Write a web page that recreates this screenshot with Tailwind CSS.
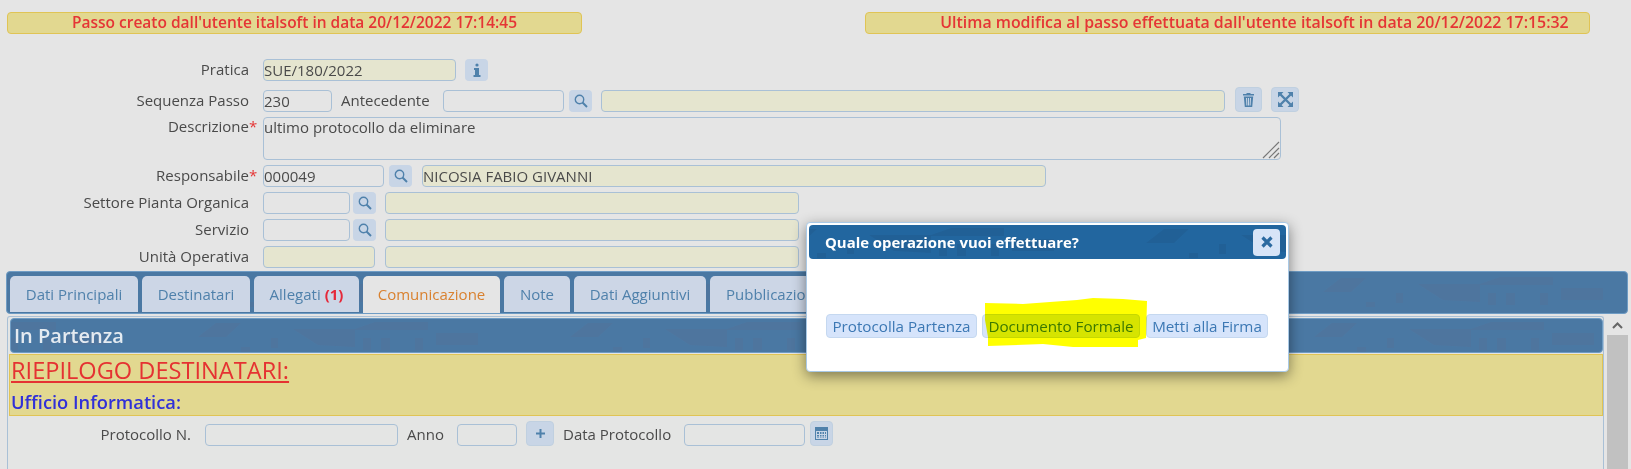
<!DOCTYPE html>
<html lang="it">
<head>
<meta charset="UTF-8">
<title>Passo</title>
<script src="https://cdn.jsdelivr.net/npm/@tailwindcss/browser@4"></script>
</head>
<body class="bg-[#e5e5e5] h-[469px] w-[1631px] overflow-hidden relative font-['Open_Sans',sans-serif] text-[15px] text-[#4a4a4a]">

<!-- shared texture + search icon -->
<svg width="0" height="0" class="absolute">
  <defs>
    <g id="texture">
      <path d="M187 18L205 4h25l-15 14zM282 10h62l20-7h8v8h-28v17l-37-2z"/>
      <path d="M0 3h45v8H0zM230 28h9v5h-9zM260 19h7v10h-7zM352 19h8v12h-8zM370 19h2v12h-2zM0 19h7v12H0zM32 19h8v12h-8zM53 14h42v12H53z"/>
    </g>
    <pattern id="bar" width="372" height="60" patternUnits="userSpaceOnUse"><use href="#texture" fill="#546f96" opacity=".4"/></pattern>
    <pattern id="tabbar" width="372" height="60" patternUnits="userSpaceOnUse" patternTransform="translate(13 2)"><use href="#texture" fill="#546f96" opacity=".4"/></pattern>
    <pattern id="dialogbar" width="372" height="60" patternUnits="userSpaceOnUse" patternTransform="translate(150 0)"><use href="#texture" fill="#1f5a8e" opacity=".5"/></pattern>
    <symbol id="lens" viewBox="0 0 14 14"><circle cx="5.500" cy="5.500" r="4.200" fill="none" stroke="#4f81ab" stroke-width="1.400"/><path d="M8.500 8.500l4.500 4.500" fill="none" stroke="#4f81ab" stroke-width="2"/></symbol>
  </defs>
</svg>

<!-- banners -->
<div class="flex pt-[12px] pl-[7px]">
  <div class="w-[575px] h-[22px] bg-[#e2d890] border border-[#e0c455] rounded-[4px] flex items-center justify-center text-[#e53535] font-semibold text-[15.500px]">Passo creato dall'utente italsoft in data 20/12/2022 17:14:45</div>
  <div class="w-[725px] h-[22px] ml-[283px] bg-[#e2d890] border border-[#e0c455] rounded-[4px] flex items-center justify-center pl-[54px] text-[#e53535] font-semibold text-[15.900px]">Ultima modifica al passo effettuata dall'utente italsoft in data 20/12/2022 17:15:32</div>
</div>

<!-- form -->
<div class="flex items-center h-[22px] mt-[25px]">
  <label class="w-[249px] text-right pb-[2px]">Pratica</label>
  <div class="ml-[14px] w-[193px] h-[22px] bg-[#e5e5cf] border border-[#a9c0d6] rounded-[4px] leading-[20px]">SUE/180/2022</div>
  <button class="ml-[9px] w-[23px] h-[22px] bg-[#c8d5e6] rounded-[4px] flex items-center justify-center">
    <svg width="8" height="14" viewBox="0 0 8 14" fill="#4f81ab"><circle cx="4" cy="2" r="1.600"/><path d="M1 5h5v7h1.500v2H.5v-2H2V7H1z"/></svg>
  </button>
</div>
<div class="flex items-end h-[25px] mt-[6px]">
  <label class="w-[249px] text-right h-[22px] leading-[21px]">Sequenza Passo</label>
  <div class="ml-[14px] w-[69px] h-[22px] border border-[#a9c0d6] rounded-[4px] leading-[21px]">230</div>
  <label class="ml-[9px] w-[102px] h-[22px] leading-[21px]">Antecedente</label>
  <div class="w-[121px] h-[22px] border border-[#a9c0d6] rounded-[4px]"></div>
  <button class="ml-[5px] w-[23px] h-[22px] bg-[#c8d5e6] rounded-[4px] flex items-center justify-center"><svg width="14" height="14"><use href="#lens"/></svg></button>
  <div class="ml-[9px] w-[624px] h-[22px] bg-[#e5e5cf] border border-[#a9c0d6] rounded-[4px]"></div>
  <button class="ml-[10px] w-[27px] h-[25px] bg-[#c8d5e6] border border-[#c0d0e0] rounded-[4px] flex items-center justify-center">
    <svg width="11" height="14" viewBox="0 0 11 14" fill="#4f81ab"><path d="M3.500 0h4v1h3.500v1.500H0V1h3.500zM.8 3.500h9.400L9.200 14H1.800zM3 5l.4 7.500h1L4.100 5zM5 5v7.500h1V5zM7 5l-.4 7.500h1L8 5z" fill-rule="evenodd"/></svg>
  </button>
  <button class="ml-[9px] w-[28px] h-[25px] bg-[#c8d5e6] border border-[#c0d0e0] rounded-[4px] flex items-center justify-center">
    <svg width="15" height="15" viewBox="0 0 15 15"><path d="M2.500 2.500l10 10M12.500 2.500l-10 10" stroke="#4f81ab" stroke-width="2.400"/><path d="M0 0h5.500L0 5.500zM15 0v5.500L9.500 0zM0 15v-5.500L5.500 15zM15 15H9.500L15 9.500z" fill="#4f81ab"/></svg>
  </button>
</div>
<div class="flex h-[43px] mt-[5px]">
  <label class="w-[249px] text-right leading-[19px]">Descrizione</label>
  <span class="w-[14px] text-[#e53535] leading-[19px]">*</span>
  <div class="relative w-[1018px] h-[43px] border border-[#a9c0d6] rounded-[4px] leading-[19px]">ultimo protocollo da eliminare
    <svg class="absolute right-0 bottom-0" width="18" height="18" viewBox="0 0 18 18" stroke="#777" stroke-width="1.200"><path d="M1 17L17 1M7 17L17 7M12 17l5-5"/></svg>
  </div>
</div>
<div class="flex items-center h-[22px] mt-[5px]">
  <label class="w-[249px] text-right pb-[2px]">Responsabile</label>
  <span class="w-[14px] text-[#e53535] pb-[2px]">*</span>
  <div class="w-[121px] h-[22px] border border-[#a9c0d6] rounded-[4px] leading-[21px]">000049</div>
  <button class="ml-[5px] w-[23px] h-[22px] bg-[#c8d5e6] rounded-[4px] flex items-center justify-center"><svg width="14" height="14"><use href="#lens"/></svg></button>
  <div class="ml-[10px] w-[624px] h-[22px] bg-[#e5e5cf] border border-[#a9c0d6] rounded-[4px] leading-[21px]">NICOSIA FABIO GIVANNI</div>
</div>
<div class="flex items-center h-[22px] mt-[5px]">
  <label class="w-[249px] text-right pb-[2px]">Settore Pianta Organica</label>
  <div class="ml-[14px] w-[87px] h-[22px] border border-[#a9c0d6] rounded-[4px]"></div>
  <button class="ml-[3px] w-[23px] h-[22px] bg-[#c8d5e6] rounded-[4px] flex items-center justify-center"><svg width="14" height="14"><use href="#lens"/></svg></button>
  <div class="ml-[9px] w-[414px] h-[22px] bg-[#e5e5cf] border border-[#a9c0d6] rounded-[4px]"></div>
</div>
<div class="flex items-center h-[22px] mt-[5px]">
  <label class="w-[249px] text-right pb-[2px]">Servizio</label>
  <div class="ml-[14px] w-[87px] h-[22px] border border-[#a9c0d6] rounded-[4px]"></div>
  <button class="ml-[3px] w-[23px] h-[22px] bg-[#c8d5e6] rounded-[4px] flex items-center justify-center"><svg width="14" height="14"><use href="#lens"/></svg></button>
  <div class="ml-[9px] w-[414px] h-[22px] bg-[#e5e5cf] border border-[#a9c0d6] rounded-[4px]"></div>
</div>
<div class="flex items-center h-[22px] mt-[5px]">
  <label class="w-[249px] text-right pb-[2px]">Unità Operativa</label>
  <div class="ml-[14px] w-[112px] h-[22px] bg-[#e5e5cf] border border-[#a9c0d6] rounded-[4px]"></div>
  <div class="ml-[10px] w-[414px] h-[22px] bg-[#e5e5cf] border border-[#a9c0d6] rounded-[4px]"></div>
</div>

<!-- tab bar -->
<div class="relative ml-[6px] mt-[3px] w-[1622px] h-[43px] bg-[#4a78a3] border border-[#6f9cc4] rounded-[4px] flex items-end gap-[4px] pl-[3px] overflow-hidden">
  <svg class="absolute inset-0 w-full h-full"><rect width="100%" height="100%" fill="url(#tabbar)"/></svg>
  <div class="relative w-[128px] h-[36px] mb-[1px] bg-[#ccd6e6] rounded-t-[5px] text-[#4f81ab] flex items-center justify-center">Dati Principali</div>
  <div class="relative w-[108px] h-[36px] mb-[1px] bg-[#ccd6e6] rounded-t-[5px] text-[#4f81ab] flex items-center justify-center">Destinatari</div>
  <div class="relative w-[105px] h-[36px] mb-[1px] bg-[#ccd6e6] rounded-t-[5px] text-[#4f81ab] flex items-center justify-center gap-[4px]">Allegati <b class="text-[#e5293a]">(1)</b></div>
  <div class="relative w-[137px] h-[37px] bg-[#e5e5e5] rounded-t-[5px] text-[#d9812f] flex items-center justify-center">Comunicazione</div>
  <div class="relative w-[66px] h-[36px] mb-[1px] bg-[#ccd6e6] rounded-t-[5px] text-[#4f81ab] flex items-center justify-center">Note</div>
  <div class="relative w-[132px] h-[36px] mb-[1px] bg-[#ccd6e6] rounded-t-[5px] text-[#4f81ab] flex items-center justify-center">Dati Aggiuntivi</div>
  <div class="relative w-[130px] h-[36px] mb-[1px] bg-[#ccd6e6] rounded-t-[5px] text-[#4f81ab] flex items-center pl-[16px] whitespace-nowrap">Pubblicazione</div>
</div>

<!-- panel + scrollbar -->
<div class="flex ml-[7px] mt-[2px]">
  <div class="w-[1597px] h-[154px] bg-[#e4e5e4] border-l border-r border-t border-[#a9c0d6] rounded-t-[3px] pt-[1px]">
    <div class="relative ml-[2px] h-[35px] bg-[#4a78a3] border border-[#6f9cc4] rounded-[4px] overflow-hidden flex items-center pl-[3px] text-white/85 font-semibold text-[20px]">
      <svg class="absolute inset-0 w-full h-full"><rect width="100%" height="100%" fill="url(#bar)"/></svg>
      <span class="relative">In Partenza</span>
    </div>
    <div class="ml-[1px] mt-[1px] h-[62px] bg-[#e2d890] border border-[#e0c455]">
      <div class="pl-[1px] text-[23.600px] leading-[30px] text-[#e53232] underline underline-offset-2">RIEPILOGO DESTINATARI:</div>
      <div class="pl-[1px] text-[18.300px] leading-[26px] mt-[4px] text-[#3030d8] font-semibold">Ufficio Informatica:</div>
    </div>
    <div class="flex items-end h-[25px] mt-[5px]">
      <label class="w-[183px] text-right h-[22px] leading-[21px]">Protocollo N.</label>
      <div class="ml-[14px] w-[193px] h-[22px] border border-[#a9c0d6] rounded-[4px]"></div>
      <label class="ml-[9px] w-[50px] h-[22px] leading-[21px]">Anno</label>
      <div class="w-[60px] h-[22px] border border-[#a9c0d6] rounded-[4px]"></div>
      <button class="ml-[9px] w-[28px] h-[25px] bg-[#c8d5e6] border border-[#c0d0e0] rounded-[4px] flex items-center justify-center">
        <svg width="9" height="9" viewBox="0 0 9 9" fill="#4f81ab"><path d="M3.500 0h2v3.500H9v2H5.500V9h-2V5.500H0v-2h3.500z"/></svg>
      </button>
      <label class="ml-[9px] w-[121px] h-[22px] leading-[21px]">Data Protocollo</label>
      <div class="w-[121px] h-[22px] border border-[#a9c0d6] rounded-[4px]"></div>
      <button class="ml-[5px] w-[23px] h-[25px] bg-[#c8d5e6] border border-[#c0d0e0] rounded-[4px] flex items-center justify-center">
        <svg width="13" height="13" viewBox="0 0 13 13" fill="#4f81ab"><path d="M0 0h13v13H0zM1 4v8h11V4zM2 5h2v2H2zM5 5h1.500v2H5zM7.500 5H9v2H7.500zM10 5h1v2h-1zM2 8h2v1.500H2zM5 8h1.500v1.500H5zM7.500 8H9v1.500H7.500zM10 8h1v1.500h-1zM2 10.500h2V11H2zM5 10.500h1.500V11H5zM7.500 10.500H9V11H7.500zM10 10.500h1V11h-1z" fill-rule="evenodd"/></svg>
      </button>
    </div>
  </div>
  <div class="ml-[3px] w-[21px] h-[154px] flex flex-col">
    <div class="h-[19px] bg-[#e5e5e5] flex items-center justify-center">
      <svg width="11" height="7" viewBox="0 0 11 7" fill="none" stroke="#666" stroke-width="2"><path d="M1 6l4.500-4.500L10 6"/></svg>
    </div>
    <div class="flex-1 bg-[#c1c1c1]"></div>
  </div>
</div>

<!-- dialog -->
<div class="absolute left-[806px] top-[222px] w-[483px] h-[150px] bg-white border border-[#a9c9e6] rounded-[4px] shadow-[0_4px_14px_rgba(0,0,0,0.45)] p-[2px]">
  <div class="relative h-[34px] bg-[#22669f] rounded-[4px] overflow-hidden flex items-center justify-between pl-[16px] pr-[6px] text-white font-bold text-[14.900px]">
    <svg class="absolute inset-0 w-full h-full"><rect width="100%" height="100%" fill="url(#dialogbar)"/></svg>
    <span class="relative">Quale operazione vuoi effettuare?</span>
    <button class="relative w-[27px] h-[27px] bg-[#d7e4f7] rounded-[4px] flex items-center justify-center">
      <svg width="12" height="12" viewBox="0 0 12 12" fill="none" stroke="#2c6aa0" stroke-width="3.200"><path d="M1.500 1.500l9 9M10.500 1.500l-9 9"/></svg>
    </button>
  </div>
  <div class="flex mt-[55px] pl-[17px] text-[15.200px]">
    <button class="w-[151px] h-[24px] bg-[#d6e4fb] border border-[#c5d8f0] rounded-[4px] text-[#3c78b4]">Protocolla Partenza</button>
    <button class="ml-[5px] w-[158px] h-[24px] bg-[#d6e4fb] border border-[#c5d8f0] rounded-[4px] text-[#3c78b4]">Documento Formale</button>
    <button class="ml-[6px] w-[122px] h-[24px] bg-[#d6e4fb] border border-[#c5d8f0] rounded-[4px] text-[#3c78b4]">Metti alla Firma</button>
  </div>
</div>

<!-- yellow highlighter -->
<svg class="absolute left-[980px] top-[295px] mix-blend-multiply" width="172" height="56" viewBox="0 0 172 56">
  <path d="M5 8L43 9L97 5L113 3L143 4L167 6L166 43L158 45L158 52L93 52L63 49L8 51L8 42L5 25Z" fill="#ffff00"/>
</svg>
</body>
</html>
